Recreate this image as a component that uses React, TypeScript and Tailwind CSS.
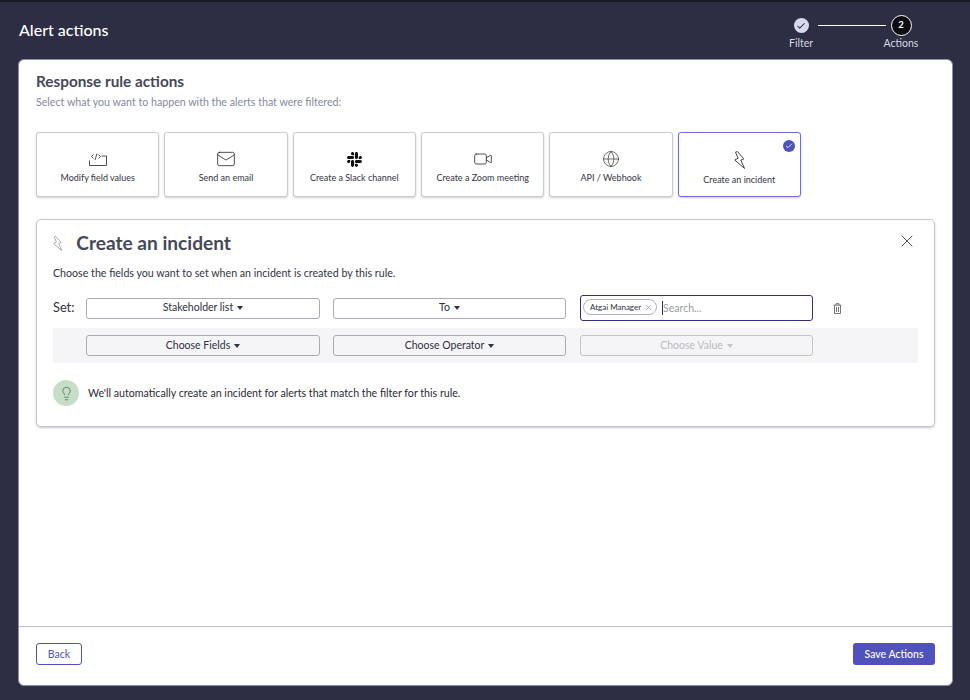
import { Check, Globe, Lightbulb, Mail, Video, X } from 'lucide-react'
import { FaSlack } from 'react-icons/fa'
import type { ReactNode } from 'react'

const Caret = ({ muted }: { muted?: boolean }) => (
  <span className={`ml-1 inline-block h-0 w-0 border-x-[3.5px] border-t-[4px] border-x-transparent ${muted ? 'border-t-[#c4c5cc]' : 'border-t-[#2f3040]'}`} />
)

const CodeIcon = () => (
  <svg width="18" height="13" viewBox="0 0 18 13" fill="none" stroke="#3a3a44" strokeWidth="0.9">
    <path d="M12.5 3H17.5V12.5H.5V7.5" />
    <path d="M4.5 1.5 2.5 3.5 4.5 5.5M9.5 1.5 11.5 3.5 9.5 5.5M8 .5 6 7" />
  </svg>
)

const Bolt = ({ size = 18, color = '#2d2d38' }: { size?: number; color?: string }) => (
  <svg width={size * 0.62} height={size} viewBox="0 0 11 18" fill="none" stroke={color} strokeWidth="0.9">
    <path d="M1.4 1.2 3.2 .5 9.8 7.8 6.8 9.1 10.4 17.4 .7 9 4 7.2Z" />
  </svg>
)

const TrashIcon = () => (
  <svg width="9" height="11" viewBox="0 0 9 11" fill="none" stroke="#63646d" strokeWidth="0.9">
    <path d="M.5 2.2H8.5M3 2V.7H6V2M1.5 2.5V10.5H7.5V2.5M3.5 4V9M5.5 4V9" />
  </svg>
)

const actions: { label: string; icon: ReactNode; active?: boolean }[] = [
  { label: 'Modify field values', icon: <CodeIcon /> },
  { label: 'Send an email', icon: <Mail size={20} strokeWidth={1} color="#2d2d38" /> },
  { label: 'Create a Slack channel', icon: <FaSlack size={17} color="#111" /> },
  { label: 'Create a Zoom meeting', icon: <Video size={20} strokeWidth={1} color="#2d2d38" /> },
  { label: 'API / Webhook', icon: <Globe size={18} strokeWidth={0.9} color="#2d2d38" /> },
  { label: 'Create an incident', icon: <Bolt />, active: true },
]

function ActionCard({ label, icon, active }: { label: string; icon: ReactNode; active?: boolean }) {
  return (
    <div className={`relative flex h-[65px] flex-1 flex-col items-center rounded-[3px] border bg-white pt-[16px] shadow-[0_1px_2px_rgba(60,60,90,0.25)] ${active ? 'border-[#6e6fdc]' : 'border-[#c9ccd6]'}`}>
      <div className={`flex items-center justify-center ${active ? 'h-[22px]' : 'h-[20px]'}`}>{icon}</div>
      <div className="mt-[4px] text-[9px] leading-none text-[#33343f]">{label}</div>
      {active && (
        <span className="absolute right-[5px] top-[7px] flex h-[12px] w-[12px] items-center justify-center rounded-full bg-[#4f52bd]">
          <Check size={8} strokeWidth={2.5} color="#fff" />
        </span>
      )}
    </div>
  )
}

function Select({ label, gray, muted, narrow }: { label: string; gray?: boolean; muted?: boolean; narrow?: boolean }) {
  return (
    <div className={`flex h-[21px] items-center justify-center rounded-[3px] border text-[10.5px] ${narrow ? 'w-[233px]' : 'w-[234px]'} ${gray ? 'bg-[#f5f5f8]' : 'bg-white'} ${muted ? 'border-[#c4c5cc] text-[#b9bac2]' : 'border-[#a9abb9] text-[#2f3040]'}`}>
      {label}
      <Caret muted={muted} />
    </div>
  )
}

export default function App() {
  return (
    <div className="flex h-[700px] w-[970px] flex-col overflow-hidden bg-[#2d2d44] font-['Lato',sans-serif]">
      <div className="h-[2px] shrink-0 bg-[#191926]" />
      <header className="flex h-[57px] shrink-0 justify-between pl-[19px] pr-[51px]">
        <h1 className="pt-[18px] text-[16px] font-medium leading-[20px] text-white">Alert actions</h1>
        <div className="flex items-start pt-[13px]">
          <div className="flex w-[40px] flex-col items-center">
            <span className="mt-[3px] flex h-[15px] w-[15px] items-center justify-center rounded-full bg-[#d9d9ee]">
              <Check size={10} strokeWidth={2.5} color="#2d2d44" />
            </span>
            <span className="mt-[3px] text-[10.5px] leading-[14px] text-[#d9d9e6]">Filter</span>
          </div>
          <div className="ml-[-3px] mr-[-3px] mt-[10px] h-px w-[68px] bg-white" />
          <div className="flex w-[36px] flex-col items-center">
            <span className="flex h-[21px] w-[21px] items-center justify-center rounded-full border border-white bg-[#0b0b10] text-[9.5px] font-bold text-white">2</span>
            <span className="text-[10.5px] leading-[14px] text-[#d9d9e6]">Actions</span>
          </div>
        </div>
      </header>

      <main className="mb-[14px] ml-[18px] mr-[17px] flex min-h-0 flex-1 flex-col rounded-[6px] border border-[#8d8da3] bg-white">
        <div className="flex-1 px-[17px] pt-[11px]">
          <h2 className="text-[15.3px] font-bold leading-[20px] text-[#454857]">Response rule actions</h2>
          <p className="mt-[4px] text-[10.65px] leading-[14px] text-[#8589a1]">Select what you want to happen with the alerts that were filtered:</p>

          <div className="mt-[23px] flex w-[765px] gap-[5px]">
            {actions.map(a => <ActionCard key={a.label} {...a} />)}
          </div>

          <section className="mt-[22px] h-[208px] w-[899px] rounded-[5px] border border-[#c4c6d0] px-[16px] pt-[11px] shadow-[0_1px_2px_rgba(60,60,90,0.3)]">
            <div className="flex items-center justify-between">
              <div className="flex items-center">
                <Bolt size={15} color="#8a8c98" />
                <h3 className="ml-[14px] text-[19.1px] font-bold leading-[24px] text-[#454857]">Create an incident</h3>
              </div>
              <X size={20} strokeWidth={1} color="#3a3a44" className="-translate-x-[1px] -translate-y-[2px]" />
            </div>
            <p className="mt-[11px] text-[10.65px] leading-[14px] text-[#33343f]">Choose the fields you want to set when an incident is created by this rule.</p>

            <div className="mt-[15px] flex h-[26px] items-center">
              <span className="w-[33px] text-[12.8px] text-[#2f3040]">Set:</span>
              <Select label="Stakeholder list" />
              <div className="ml-[13px]"><Select label="To" narrow /></div>
              <div className="ml-[14px] flex h-[26px] w-[233px] items-center rounded-[3px] border border-[#2f2f7a] bg-white pl-[2px]">
                <span className="flex h-[16px] -translate-y-[1px] items-center rounded-full border border-[#b3b5c2] pl-[6px] pr-[3px] text-[8px] text-[#2f3040]">
                  Atgai Manager
                  <X size={9} strokeWidth={1} color="#2f3040" className="ml-[3px]" />
                </span>
                <span className="ml-[5px] h-[14px] w-px bg-[#2f3040]" />
                <span className="translate-y-[1px] text-[10.5px] text-[#9a9ba6]">Search...</span>
              </div>
              <span className="ml-[20px]"><TrashIcon /></span>
            </div>

            <div className="mt-[7px] flex h-[35px] items-center bg-[#f5f5f8] pl-[33px]">
              <Select label="Choose Fields" gray />
              <div className="ml-[13px]"><Select label="Choose Operator" gray narrow /></div>
              <div className="ml-[14px]"><Select label="Choose Value" gray muted narrow /></div>
            </div>

            <div className="mt-[17px] flex items-center">
              <span className="flex h-[26px] w-[26px] items-center justify-center rounded-full bg-[#c5dfc6]">
                <Lightbulb size={15} strokeWidth={0.9} color="#2f3a30" />
              </span>
              <p className="ml-[9px] text-[10.65px] leading-none text-[#2a2b36]">We'll automatically create an incident for alerts that match the filter for this rule.</p>
            </div>
          </section>
        </div>

        <footer className="flex h-[59px] shrink-0 items-start justify-between border-t border-[#bfc2cf] px-[17px] pt-[16px]">
          <button className="h-[22px] w-[46px] rounded-[3px] border border-[#4f52bd] bg-white pt-px text-[10.5px] text-[#4f52bd]">Back</button>
          <button className="h-[22px] w-[82px] rounded-[3px] bg-[#4f52bd] pt-px text-[10.5px] font-medium text-white">Save Actions</button>
        </footer>
      </main>
    </div>
  )
}
